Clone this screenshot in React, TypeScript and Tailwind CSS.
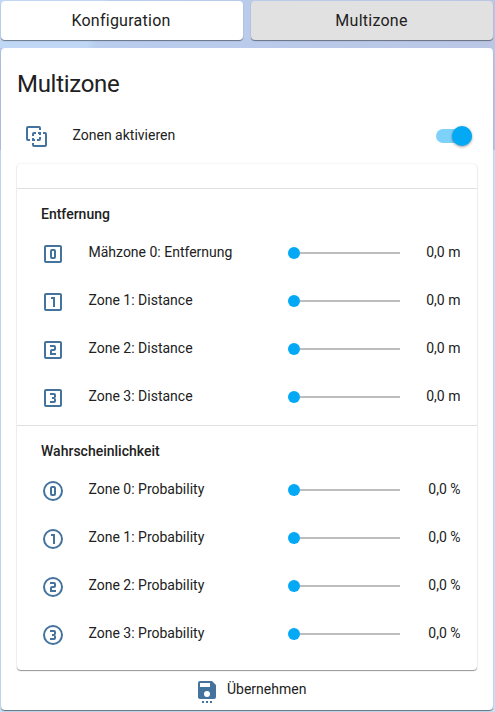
import React from "react";

const digits = [
  "M11,7A2,2 0 0,0 9,9V15A2,2 0 0,0 11,17H13A2,2 0 0,0 15,15V9A2,2 0 0,0 13,7H11M11,9H13V15H11V9Z",
  "M12,17V9H10V7H14V17H12Z",
  "M15,11V9A2,2 0 0,0 13,7H9V9H13V11H11A2,2 0 0,0 9,13V17H15V15H11V13H13A2,2 0 0,0 15,11Z",
  "M15,15V13.5A1.5,1.5 0 0,0 13.5,12A1.5,1.5 0 0,0 15,10.5V9A2,2 0 0,0 13,7H9V9H13V11H11V13H13V15H9V17H13A2,2 0 0,0 15,15Z",
];

function Icon({ children, className = "" }: { children: React.ReactNode; className?: string }) {
  return (
    <svg viewBox="0 0 24 24" className={`size-6 shrink-0 fill-[#44739e] ${className}`}>
      {children}
    </svg>
  );
}

function NumberIcon({ n, round }: { n: number; round?: boolean }) {
  return (
    <Icon className="mt-1">
      {round ? (
        <circle cx="12" cy="12" r="9" fill="none" stroke="#44739e" strokeWidth="2" />
      ) : (
        <rect x="4" y="4" width="16" height="16" rx="1" fill="none" stroke="#44739e" strokeWidth="2" />
      )}
      <path d={digits[n]} />
    </Icon>
  );
}

function SliderRow({ n, label, value, round }: { n: number; label: string; value: string; round?: boolean }) {
  return (
    <div className="flex h-12 items-center pr-[16.5px] pl-6">
      <NumberIcon n={n} round={round} />
      <span className="ml-[23.5px] w-[199.5px]">{label}</span>
      <div className="mt-0.5 flex w-28 items-center">
        <div className="size-3 rounded-full bg-[#03a9f4]" />
        <div className="h-0.5 flex-1 bg-[#bdbdbd]" />
      </div>
      <span className="flex-1 text-right">{value}</span>
    </div>
  );
}

function Tab({ label, className }: { label: string; className: string }) {
  return (
    <button
      className={`h-[39px] rounded pt-px text-base leading-5 tracking-[0.25px] shadow-[0_1px_1px_rgba(0,0,0,0.45)] ${className}`}
    >
      {label}
    </button>
  );
}

export default function App() {
  return (
    <div className="h-[712px] w-[495px] overflow-hidden bg-linear-to-b from-[#b9c9ea] from-0% via-[#b3c4e8] via-21% to-[#c8e1f6] to-21% font-[Roboto,sans-serif] text-sm leading-5 text-[#212121]">
      <nav className="flex h-12 items-start justify-between bg-linear-110 from-[#c0d8f5] from-20% via-[#b9cdee] via-22% to-[#bbc6e5] pt-px pr-0.5 pl-px">
        <Tab label="Konfiguration" className="w-[242px] bg-white pr-0.5" />
        <Tab label="Multizone" className="w-[242px] bg-[#e1e1e1] pr-px" />
      </nav>
      <main className="mr-0.5 ml-px h-[662px] rounded bg-white px-4 shadow-[0_1px_1px_rgba(0,0,0,0.5)]">
        <h1 className="pt-5 text-2xl leading-8 tracking-[-0.012em]">Multizone</h1>
        <div className="mt-3 flex h-12 items-center pl-2">
          <Icon className="mt-0.5">
            <path d="M3,1A2,2 0 0,0 1,3V14A2,2 0 0,0 3,16H5V14H3V3H14V5H16V3A2,2 0 0,0 14,1H3M9,7A2,2 0 0,0 7,9V11H9V9H11V7H9M13,7V9H14V10H16V7H13M18,7V9H20V20H9V18H7V20A2,2 0 0,0 9,22H20A2,2 0 0,0 22,20V9A2,2 0 0,0 20,7H18M14,12V14H12V16H14A2,2 0 0,0 16,14V12H14M7,13V16H10V14H9V13H7Z" />
          </Icon>
          <span className="ml-[23.5px] flex-1 pb-0.5">Zonen aktivieren</span>
          <div className="mr-[5px] flex h-3.5 w-9 items-center justify-end rounded-full bg-[#7ed2fa]">
            <div className="size-5 shrink-0 rounded-full bg-[#03a9f4] shadow-[0_1px_3px_rgba(0,0,0,0.4)]" />
          </div>
        </div>
        <section className="mt-1 h-[506px] rounded shadow-[0_1px_1px_rgba(0,0,0,0.4),0_0_2px_rgba(0,0,0,0.12)]">
          <div className="h-6" />
          <div className="border-t border-[#e0e0e0] pb-[5px]">
            <h2 className="h-[39px] pt-[15px] pl-6 font-medium">Entfernung</h2>
            <SliderRow n={0} label="Mähzone 0: Entfernung" value="0,0 m" />
            <SliderRow n={1} label="Zone 1: Distance" value="0,0 m" />
            <SliderRow n={2} label="Zone 2: Distance" value="0,0 m" />
            <SliderRow n={3} label="Zone 3: Distance" value="0,0 m" />
          </div>
          <div className="border-t border-[#e0e0e0]">
            <h2 className="h-[39px] pt-[15px] pl-6 font-medium">Wahrscheinlichkeit</h2>
            <SliderRow n={0} round label="Zone 0: Probability" value="0,0 %" />
            <SliderRow n={1} round label="Zone 1: Probability" value="0,0 %" />
            <SliderRow n={2} round label="Zone 2: Probability" value="0,0 %" />
            <SliderRow n={3} round label="Zone 3: Probability" value="0,0 %" />
          </div>
        </section>
        <button className="mt-[7px] flex w-full items-center pl-[178px]">
          <Icon className="mt-0.5">
            <path d="M15,8V4H5V8H15M12,18A3,3 0 0,0 15,15A3,3 0 0,0 12,12A3,3 0 0,0 9,15A3,3 0 0,0 12,18M17,2L21,6V18A2,2 0 0,1 19,20H5C3.89,20 3,19.1 3,18V4A2,2 0 0,1 5,2H17M11,22H13V24H11V22M7,22H9V24H7V22M15,22H17V24H15V22Z" />
          </Icon>
          <span className="ml-2 pb-0.5">Übernehmen</span>
        </button>
      </main>
    </div>
  );
}
